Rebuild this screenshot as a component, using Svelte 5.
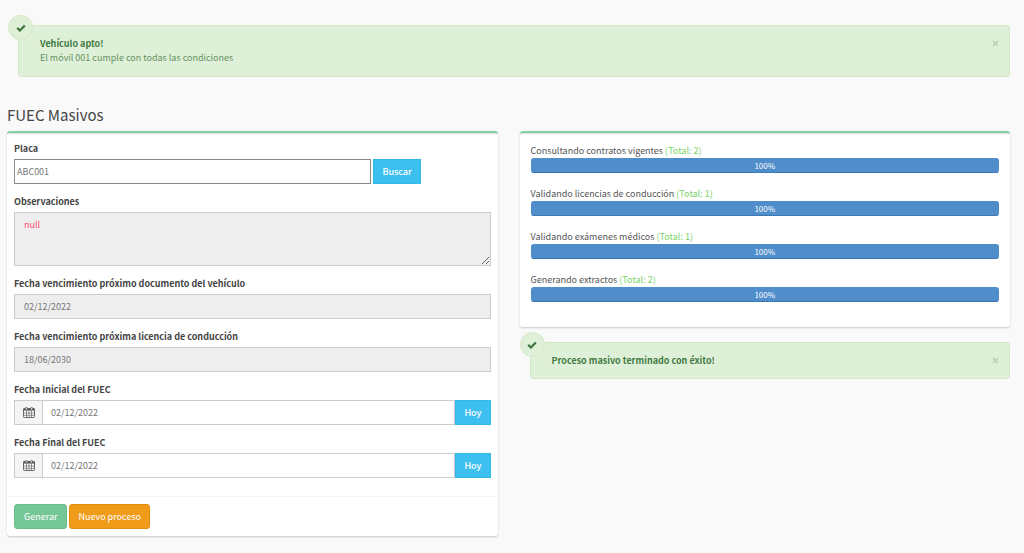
<script>
  let placa = $state('ABC001');
  let observaciones = $state('null');
  let inicio = $state('02/12/2022');
  let fin = $state('02/12/2022');
  const tareas = [
    { nombre: 'Consultando contratos vigentes', total: 2, avance: 100 },
    { nombre: 'Validando licencias de conducción', total: 1, avance: 100 },
    { nombre: 'Validando exámenes médicos', total: 1, avance: 100 },
    { nombre: 'Generando extractos', total: 2, avance: 100 }
  ];
</script>

{#snippet badge()}
  <span class="badge">
    <svg width="10" height="8" viewBox="0 0 10 8" aria-hidden="true">
      <path d="M1.2 3.9 L3.9 6.5 L8.8 1.5" fill="none" stroke="#3c763d" stroke-width="2.2" />
    </svg>
  </span>
{/snippet}

{#snippet cerrar()}
  <button class="close" type="button" aria-label="Cerrar">
    <svg width="7" height="7" viewBox="0 0 7 7" aria-hidden="true">
      <path d="M1 1 L6 6 M6 1 L1 6" fill="none" stroke="#b9d2b5" stroke-width="1.7" />
    </svg>
  </button>
{/snippet}

{#snippet calendario()}
  <span class="addon">
    <svg width="12" height="12" viewBox="0 0 12 12" aria-hidden="true">
      <rect x="0.5" y="1.5" width="11" height="9" rx="0.8" fill="#fff" stroke="#666" />
      <path d="M0.5 1.5 H11.5 V3.6 H0.5 Z" fill="#555" />
      <path d="M3.5 4 V10.5 M6 4 V10.5 M8.5 4 V10.5 M0.5 6 H11.5 M0.5 8.3 H11.5" stroke="#777" stroke-width="0.8" />
      <rect x="2.4" y="0.4" width="1.9" height="2.6" rx="0.8" fill="#eee" stroke="#555" stroke-width="0.8" />
      <rect x="7.7" y="0.4" width="1.9" height="2.6" rx="0.8" fill="#eee" stroke="#555" stroke-width="0.8" />
    </svg>
  </span>
{/snippet}

<main>
  <div class="alert" role="status">
    {@render badge()}
    <div><strong>Vehículo apto!</strong><p>El móvil 001 cumple con todas las condiciones</p></div>
    {@render cerrar()}
  </div>

  <h1>FUEC Masivos</h1>

  <div class="columns">
    <form class="panel" onsubmit={(e) => e.preventDefault()}>
      <div class="fields">
        <div class="field">
          <label for="placa">Placa</label>
          <div class="search">
            <input id="placa" class="plain" type="text" bind:value={placa} />
            <button class="btn info" type="button">Buscar</button>
          </div>
        </div>
        <div class="field">
          <label for="obs">Observaciones</label>
          <textarea id="obs" readonly bind:value={observaciones}></textarea>
        </div>
        <div class="field">
          <label for="doc">Fecha vencimiento próximo documento del vehículo</label>
          <input id="doc" type="text" readonly value="02/12/2022" />
        </div>
        <div class="field">
          <label for="lic">Fecha vencimiento próxima licencia de conducción</label>
          <input id="lic" type="text" readonly value="18/06/2030" />
        </div>
        <div class="field">
          <label for="ini">Fecha Inicial del FUEC</label>
          <div class="group">
            {@render calendario()}
            <input id="ini" type="text" bind:value={inicio} />
            <button class="btn info" type="button">Hoy</button>
          </div>
        </div>
        <div class="field">
          <label for="fin">Fecha Final del FUEC</label>
          <div class="group">
            {@render calendario()}
            <input id="fin" type="text" bind:value={fin} />
            <button class="btn info" type="button">Hoy</button>
          </div>
        </div>
      </div>
      <div class="actions">
        <button class="btn success" type="submit">Generar</button>
        <button class="btn warning" type="button">Nuevo proceso</button>
      </div>
    </form>

    <div>
      <section class="panel tasks">
        {#each tareas as t}
          <div>
            <p>{t.nombre} <span class="total">(Total: {t.total})</span></p>
            <div class="track" role="progressbar" aria-label={t.nombre} aria-valuenow={t.avance} aria-valuemin="0" aria-valuemax="100">
              <div class="bar" style="width: {t.avance}%">{t.avance}%</div>
            </div>
          </div>
        {/each}
      </section>
      <div class="alert small" role="status">
        {@render badge()}
        <strong>Proceso masivo terminado con éxito!</strong>
        {@render cerrar()}
      </div>
    </div>
  </div>
</main>

<style>
  :global(body) {
    background: #f9f9f9;
  }
  main, input, textarea, button {
    font-family: "Noto Sans CJK SC", "Open Sans", sans-serif;
    font-size: 9px;
    line-height: 14px;
    box-sizing: border-box;
  }
  main {
    color: #555;
    padding: 25px 14px 16px 7px;
  }
  p, h1 {
    margin: 0;
  }
  .alert {
    position: relative;
    display: flex;
    justify-content: space-between;
    align-items: flex-start;
    margin-left: 11px;
    padding: 11px 10px 11px 21px;
    border: 1px solid #d6e9c6;
    border-radius: 3px;
    background: #dff0d8;
    color: #64905f;
  }
  .alert strong {
    color: #437a43;
  }
  .badge {
    position: absolute;
    top: -11px;
    left: -11px;
    width: 23px;
    height: 23px;
    display: grid;
    place-items: center;
    border: 1px solid #d6e9c6;
    border-radius: 50%;
    background: #dff0d8;
  }
  .close {
    display: grid;
    place-items: center;
    height: 12px;
    padding: 0;
    border: 0;
    background: none;
  }
  h1 {
    margin: 27px 0 6px;
    font-size: 15px;
    line-height: 21px;
    font-weight: 400;
    color: #444;
  }
  .columns {
    display: grid;
    grid-template-columns: 1fr 1fr;
    align-items: start;
    gap: 22px;
  }
  .panel {
    background: #fff;
    border-top: 2px solid #86d2a5;
    border-radius: 3px;
    box-shadow: 0 1px 2px rgba(0, 0, 0, 0.2), inset 0 1px 0 #ddd;
  }
  .fields {
    display: grid;
    gap: 11px;
    padding: 9px 7px 18px;
  }
  .field {
    display: grid;
    gap: 3px;
  }
  label {
    font-weight: 700;
    color: #444;
  }
  input, textarea {
    display: block;
    width: 100%;
    min-width: 0;
    height: 25px;
    margin: 0;
    padding: 0 9px;
    border: 1px solid #ccc;
    border-radius: 0;
    background: #fff;
    color: #777;
  }
  input:read-only, textarea {
    background: #eee;
  }
  textarea {
    height: 54px;
    padding: 5px 9px;
    color: #ff4a70;
    resize: vertical;
  }
  .search {
    display: grid;
    grid-template-columns: 75% auto;
    justify-items: start;
    gap: 2px;
  }
  .plain {
    padding: 0 2px;
    border-color: #8a8a8a;
  }
  .group {
    display: flex;
  }
  .addon {
    flex: none;
    width: 27px;
    display: grid;
    place-items: center;
    border: 1px solid #ccc;
    border-right: 0;
    background: #f4f4f4;
  }
  .group input {
    padding: 0 8px;
  }
  .btn {
    flex: none;
    height: 25px;
    padding: 0 8px;
    border: 1px solid;
    color: #fff;
  }
  .info {
    background: #3dc0f0;
    border-color: #35b8e8;
    font-weight: 500;
  }
  .success {
    padding: 0 9px;
    background: #76c797;
    border-color: #6bbf8d;
    border-radius: 3px;
  }
  .warning {
    background: #f09c1a;
    border-color: #e08e0b;
    border-radius: 3px;
  }
  .actions {
    display: flex;
    gap: 2px;
    padding: 7px;
    border-top: 1px solid #f4f4f4;
  }
  .tasks {
    display: grid;
    gap: 14px;
    padding: 11px 11px 25px;
  }
  .total {
    color: #7ad368;
  }
  .track {
    height: 15px;
    border-radius: 3px;
    overflow: hidden;
    background: #f5f5f5;
  }
  .bar {
    height: 100%;
    background: #4f8dcb;
    box-shadow: inset 0 -1px 0 #3c78b4;
    color: #fff;
    font-size: 8px;
    line-height: 15px;
    text-align: center;
  }
  .small {
    margin: 15px 0 0 10px;
    padding-bottom: 10px;
  }
</style>
